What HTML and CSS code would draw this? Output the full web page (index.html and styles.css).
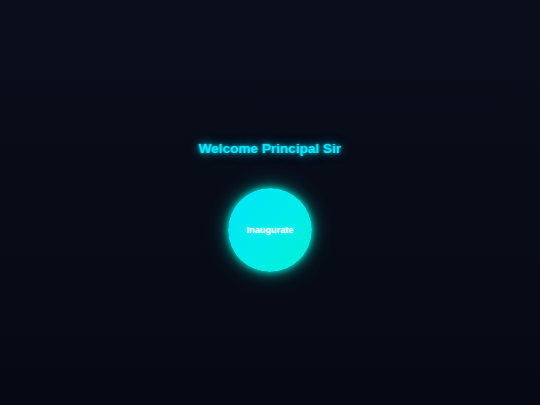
FILE: index.html
```html
<!DOCTYPE html>
<html lang="en">
<head>
<meta charset="utf-8">
<title>Welcome</title>
<link rel="stylesheet" href="styles.css">
</head>
<body>
<main class="stage">
  <h1 class="title">Welcome Principal Sir</h1>
  <button class="orb" type="button">Inaugurate</button>
</main>
</body>
</html>
```

FILE: styles.css
```css
html, body {
  margin: 0;
  padding: 0;
  height: 100%;
}
body {
  background: linear-gradient(180deg, #0a0e1a 0%, #080c17 55%, #060913 100%);
  font-family: "Liberation Sans", Arial, sans-serif;
}
.stage {
  height: 100%;
  box-sizing: border-box;
  padding-top: 8px;
  display: flex;
  flex-direction: column;
  align-items: center;
  justify-content: center;
  gap: 31px;
}
.title {
  margin: 0;
  font-size: 13.6px;
  line-height: 16px;
  font-weight: 700;
  color: #00eaff;
  text-shadow: 0 0 3px rgba(0, 229, 255, 1), 0 0 8px rgba(0, 229, 255, 0.7), 0 0 14px rgba(0, 229, 255, 0.35);
}
.orb {
  width: 84px;
  height: 84px;
  border-radius: 50%;
  border: none;
  padding: 0;
  background: linear-gradient(135deg, #00e6f8 0%, #00ecec 50%, #00f0d6 100%);
  color: #f2ffff;
  font-family: "Liberation Sans", Arial, sans-serif;
  font-size: 9.2px;
  font-weight: 700;
  text-shadow: 0 0 3px rgba(255, 255, 255, 0.6);
  box-shadow: 0 0 6px rgba(0, 235, 215, 0.95), 0 0 14px rgba(0, 230, 210, 0.6), 0 0 28px rgba(0, 230, 210, 0.25);
  cursor: pointer;
}
```
